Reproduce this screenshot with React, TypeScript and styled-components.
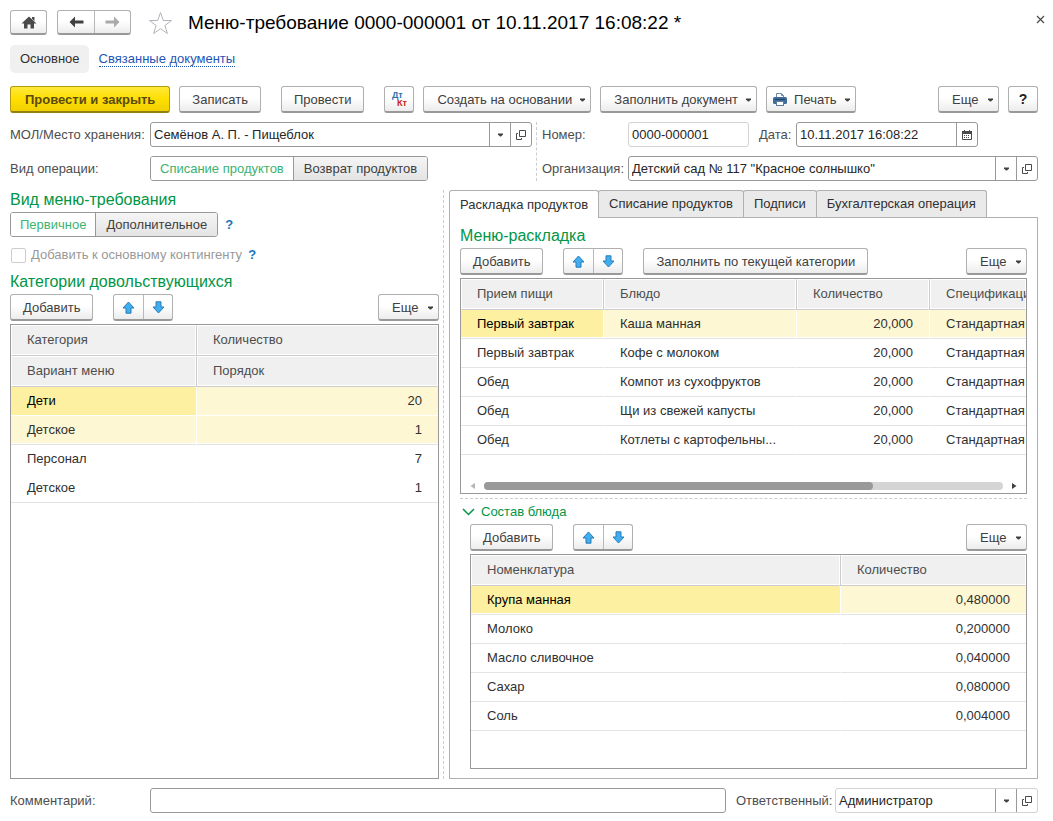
import React, { ReactNode, useId } from "react";
import styled, { createGlobalStyle, css } from "styled-components";

const Global = createGlobalStyle`
  *, *::before, *::after { box-sizing: border-box; }
  body { margin: 0; background: #fff; }
  body, button, input, select, table {
    font-family: "Liberation Sans", Arial, sans-serif;
    font-size: 13px;
    line-height: 16px;
    color: #404040;
  }
`;

const Page = styled.div`
  display: flex;
  flex-direction: column;
  min-height: 100vh;
  padding: 10px 15px 8px 10px;
`;

/* ---------- buttons ---------- */

const raised = css`
  border: 1px solid #b0b0b0;
  border-bottom: 2px solid #999;
  border-radius: 3px;
  background: linear-gradient(#fff 45%, #ececec);
`;

const Button = styled.button<{ $primary?: boolean; $width?: number; $height?: number }>`
  ${raised}
  display: inline-flex;
  align-items: center;
  justify-content: center;
  gap: 7px;
  flex: none;
  height: ${(p) => p.$height ?? 27}px;
  padding: 1px 12px 0;
  white-space: nowrap;
  ${(p) => p.$width && css`width: ${p.$width}px; padding: 0;`}
  ${(p) =>
    p.$primary &&
    css`
      padding: 1px 14px 0;
      border-color: #b39b12 #b39b12 #94800e;
      background: linear-gradient(#ffe93a, #ffdf00 50%, #f0d000);
      color: #5a4a10;
      font-weight: bold;
    `}
`;

const MenuButton = styled(Button)<{ $icon?: boolean }>`
  justify-content: space-between;
  min-width: 61px;
  padding: 1px 4px 0 ${(p) => (p.$icon ? 6 : 13)}px;
`;

const PairFrame = styled.div<{ $height: number }>`
  ${raised}
  display: flex;
  flex: none;
  height: ${(p) => p.$height}px;
`;

const PairButton = styled.button<{ $width: number }>`
  display: flex;
  align-items: center;
  justify-content: center;
  width: ${(p) => p.$width}px;
  padding: 0;
  border: 0;
  background: none;
  & + & { border-left: 1px solid #b8b8b8; }
`;

const Bar = styled.div`
  display: flex;
  align-items: center;
  gap: 20px;
  height: 27px;
  flex: none;
`;

const Spacer = styled.div`
  flex: 1;
`;

/* ---------- title ---------- */

const TitleRow = styled.header`
  display: flex;
  align-items: center;
  height: 25px;
  gap: 10px;
`;

const Title = styled.h1`
  flex: 1;
  margin: 1px 0 0 5px;
  font-size: 19px;
  line-height: 24px;
  font-weight: normal;
  color: #000;
  white-space: nowrap;
`;

const StarButton = styled.button`
  display: flex;
  margin-left: 7px;
  padding: 0;
  border: 0;
  background: none;
`;

const CloseButton = styled.button`
  align-self: flex-start;
  display: flex;
  margin: 5px -7px 0 0;
  padding: 0;
  border: 0;
  background: none;
`;

const Nav = styled.nav`
  display: flex;
  align-items: center;
  gap: 10px;
  margin-top: 10px;
`;

const NavCurrent = styled.a`
  padding: 6px 9px 6px 10px;
  border-radius: 5px;
  background: #f0f0f0;
  color: #303030;
  text-decoration: none;
`;

const NavLink = styled.a`
  color: #1f55b5;
  line-height: 15px;
  border-bottom: 1px dotted #1f55b5;
  text-decoration: none;
`;

const Commands = styled.div`
  display: flex;
  gap: 9px;
  margin-top: 13px;
`;

const Gap = styled.div`
  width: 2px;
`;

const DtKt = styled.span`
  display: flex;
  flex-direction: column;
  width: 15px;
  font-size: 9px;
  line-height: 8px;
  font-weight: bold;
  text-align: left;
  color: #2f6fa8;
`;

const Kt = styled.span`
  align-self: flex-end;
  color: #c8201a;
`;

const HelpMark = styled.span`
  font-size: 14px;
  font-weight: bold;
  color: #222;
`;

/* ---------- fields ---------- */

const Fields = styled.div`
  display: grid;
  grid-template-columns: minmax(0, 526fr) minmax(0, 502fr);
  margin-top: 9px;
`;

const FieldColumn = styled.div<{ $split?: boolean }>`
  display: flex;
  flex-direction: column;
  gap: 9px;
  ${(p) =>
    p.$split
      ? css`border-left: 1px dashed #ccc; padding-left: 5px;`
      : css`padding-right: 4px;`}
`;

const FieldRow = styled.div`
  display: flex;
  align-items: center;
  height: 25px;
`;

const Label = styled.label<{ $width?: number }>`
  flex: none;
  width: ${(p) => (p.$width ? `${p.$width}px` : "auto")};
  color: #4d4d4d;
  white-space: nowrap;
`;

const InputFrame = styled.div<{ $soft?: boolean; $width?: number }>`
  display: flex;
  height: 25px;
  min-width: 0;
  flex: ${(p) => (p.$width ? `0 0 ${p.$width}px` : "1")};
  border: 1px solid ${(p) => (p.$soft ? "#d3d3d3" : "#999")};
  border-radius: 3px;
  overflow: hidden;
`;

const Input = styled.input`
  flex: 1;
  min-width: 0;
  width: 0;
  padding: 0 3px;
  border: 0;
  outline: 0;
  background: none;
  color: #262626;
`;

const InputButton = styled.button`
  display: flex;
  align-items: center;
  justify-content: center;
  flex: none;
  width: 21px;
  padding: 0;
  border: 0;
  border-left: 1px solid #999;
  background: none;
`;

const Segments = styled.div`
  display: flex;
  height: 25px;
  border: 1px solid #999;
  border-radius: 3px;
  overflow: hidden;
`;

const Segment = styled.button<{ $active?: boolean }>`
  padding: 0 ${(p) => (p.$active ? 9 : 10)}px;
  border: 0;
  white-space: nowrap;
  background: ${(p) => (p.$active ? "#fff" : "linear-gradient(#f5f5f5, #e4e4e4)")};
  color: ${(p) => (p.$active ? "#3cb371" : "#404040")};
  & + & { border-left: 1px solid #999; }
`;

/* ---------- main area ---------- */

const Main = styled.main`
  display: grid;
  flex: 1;
  grid-template-columns: minmax(0, 433fr) minmax(0, 595fr);
  margin-top: 9px;
`;

const LeftPane = styled.section`
  display: flex;
  flex-direction: column;
  padding-right: 4px;
`;

const RightPane = styled.section`
  display: flex;
  flex-direction: column;
  padding-left: 5px;
  border-left: 1px dashed #ccc;
`;

const Heading = styled.h2`
  margin: 0 0 2px;
  font-size: 16px;
  line-height: 20px;
  font-weight: normal;
  color: #009646;
`;

const SegmentRow = styled.div`
  display: flex;
  align-items: center;
  gap: 7px;
`;

const HelpLink = styled.button`
  padding: 0;
  border: 0;
  background: none;
  color: #1a75bc;
  font-weight: bold;
`;

const CheckRow = styled.div`
  display: flex;
  align-items: center;
  gap: 6px;
  height: 16px;
  margin: 10px 0 9px;
`;

const CheckLabel = styled.label`
  display: flex;
  align-items: center;
  gap: 5px;
  color: #999;
`;

const CheckBox = styled.input`
  appearance: none;
  width: 15px;
  height: 15px;
  margin: 0 0 0 1px;
  border: 1px solid #ccc;
  border-radius: 2px;
  background: #fff;
`;

const Tabs = styled.div`
  display: flex;
  align-items: flex-start;
  height: 28px;
`;

const Tab = styled.button<{ $active?: boolean }>`
  height: ${(p) => (p.$active ? 28 : 27)}px;
  margin-left: ${(p) => (p.$active ? 0 : -1)}px;
  padding: 0 10px;
  border: 1px solid #b0b0b0;
  border-bottom: 0;
  border-radius: 3px 3px 0 0;
  background: ${(p) => (p.$active ? "#fff" : "#eaeaea")};
  color: #303030;
  white-space: nowrap;
  z-index: ${(p) => (p.$active ? 1 : 0)};
`;

const TabPanel = styled.div`
  display: flex;
  flex-direction: column;
  flex: 1;
  margin-top: -1px;
  padding: 8px 10px 9px;
  border: 1px solid #b0b0b0;
`;

const TableFrame = styled.div<{ $fill?: boolean }>`
  display: flex;
  flex-direction: column;
  flex: ${(p) => (p.$fill ? "1" : "none")};
  margin-top: 3px;
  min-height: ${(p) => (p.$fill ? "0" : "216px")};
  border: 1px solid #999;
  overflow: hidden;
`;

const Table = styled.table`
  width: 100%;
  table-layout: fixed;
  border-collapse: separate;
  border-spacing: 0;
`;

const Th = styled.th`
  height: 31px;
  padding: 0 0 1px 15px;
  border: 1px solid #fff;
  border-bottom: 1px solid #ccc;
  background: #f0f0f0;
  color: #4d4d4d;
  font-weight: normal;
  text-align: left;
  white-space: nowrap;
  box-shadow: inset 0 -1px #fff;
  & + & {
    padding-left: 16px;
    border-left-color: #ccc;
    box-shadow: inset 1px -1px #fff;
  }
`;

const tones = { current: "#fdf0a0", row: "#fdf7d3" };

const Td = styled.td<{ $tone?: "current" | "row"; $num?: boolean; $joined?: boolean }>`
  height: 29px;
  padding: 0 ${(p) => (p.$num ? 16 : 0)}px 0 16px;
  border-bottom: 1px solid ${(p) => (p.$joined ? "#fff" : "#e3e3e3")};
  background: ${(p) => (p.$tone ? tones[p.$tone] : "#fff")};
  color: ${(p) => (p.$tone === "current" ? "#000" : "#303030")};
  text-align: ${(p) => (p.$num ? "right" : "left")};
  white-space: nowrap;
  overflow: hidden;
  box-shadow: ${(p) => (p.$tone && !p.$joined ? "inset 0 -1px #fff" : "none")};
  & + & { border-left: 1px solid ${(p) => (p.$tone ? "#fff" : "transparent")}; }
`;

const Col = styled.col<{ $width: string }>`
  width: ${(p) => p.$width};
`;

const ScrollBar = styled.div`
  display: flex;
  align-items: center;
  gap: 9px;
  margin: auto 9px 3px;
`;

const ScrollTrack = styled.div`
  flex: 1;
  height: 8px;
  border-radius: 4px;
  background: #d5d5d5;
`;

const ScrollThumb = styled.div`
  width: 75%;
  height: 8px;
  border-radius: 4px;
  background: #999;
`;

const Splitter = styled.div`
  margin-top: 4px;
  border-top: 1px dashed #ccc;
`;

const GroupToggle = styled.button`
  display: flex;
  align-items: center;
  gap: 6px;
  align-self: flex-start;
  height: 25px;
  padding: 0 2px;
  border: 0;
  background: none;
  color: #009646;
`;

const Group = styled.div`
  display: flex;
  flex-direction: column;
  flex: 1;
  padding-left: 10px;
`;

const Footer = styled.footer`
  display: flex;
  align-items: center;
  margin-top: 9px;
`;

const FieldGap = styled.div`
  width: 10px;
`;

/* ---------- icons ---------- */

const Caret = () => (
  <svg width="7" height="4" viewBox="0 0 7 4" aria-hidden="true">
    <path d="M1 0.500h5v1L4 3.500H3L1 1.500z" fill="#404040" />
  </svg>
);

const OpenIcon = () => (
  <svg width="10" height="10" viewBox="0 0 10 10" fill="none" stroke="#4a4a4a" aria-hidden="true">
    <path d="M3.500 0.500h6v6h-6zM2 3.500H0.500v6h5V8" />
  </svg>
);

const HomeIcon = () => (
  <svg width="16" height="13" viewBox="0 0 16 13" fill="#4a4a4a" aria-hidden="true">
    <path d="M8 0.500L15.500 7.500H13V12.500H9.500V8.500h-3v4H3v-5H0.500zM11 1h2.500v4L11 2.700z" />
  </svg>
);

const ArrowIcon = ({ color, flip }: { color: string; flip?: boolean }) => (
  <svg width="15" height="12" viewBox="0 0 15 12" aria-hidden="true">
    <path
      d={flip ? "M14.500 6L9 0.500v4H0.500v3H9v4z" : "M0.500 6L6 0.500v4h8.500v3H6v4z"}
      fill={color}
    />
  </svg>
);

const StarIcon = () => (
  <svg width="25" height="24" viewBox="0 0 25 24" fill="none" stroke="#b0b5ba" aria-hidden="true">
    <path d="M12.500 1.500l2.800 8h8.200l-6.600 5 2.500 8-6.900-4.800-6.900 4.800 2.500-8-6.600-5h8.200z" />
  </svg>
);

const CloseIcon = () => (
  <svg width="9" height="9" viewBox="0 0 9 9" stroke="#4a4a4a" strokeWidth="1.2" aria-hidden="true">
    <path d="M1 1l7 7M8 1L1 8" />
  </svg>
);

const PrinterIcon = () => (
  <svg width="14" height="15" viewBox="0 0 14 15" aria-hidden="true">
    <path d="M3.500 6V1.500h5l2 2V6" fill="#fff" stroke="#6f8ba8" />
    <path d="M8.500 1.500v2h2" fill="none" stroke="#6f8ba8" />
    <rect x="0" y="5" width="14" height="7" rx="1.500" fill="#3f6c99" />
    <path d="M2 7.500h10" stroke="#1f4469" />
    <rect x="3.500" y="9.500" width="7" height="4" fill="#fff" stroke="#5a7da0" />
  </svg>
);

const MoveIcon = ({ down }: { down?: boolean }) => (
  <svg width="13" height="13" viewBox="0 0 13 13" aria-hidden="true">
    <path
      d={
        down
          ? "M4 0.800h5v5.200h3L6.500 12 1 6h3z"
          : "M6.500 1L12 7H9v5.200H4V7H1z"
      }
      fill="#41aef0"
      stroke="#2b7cb5"
      strokeLinejoin="round"
    />
  </svg>
);

const CalendarIcon = () => (
  <svg width="10" height="10" viewBox="0 0 10 10" aria-hidden="true">
    <path d="M0.500 2.500h9v7h-9z" fill="#fff" stroke="#4a4a4a" />
    <path d="M0 1h10v3H0zM2 0h1v1H2zM7 0h1v1H7z" fill="#4a4a4a" />
    <path d="M2 5.500h6M2 7.500h6" stroke="#4a4a4a" strokeDasharray="1 1" />
  </svg>
);

const ChevronIcon = () => (
  <svg width="13" height="8" viewBox="0 0 13 8" fill="none" stroke="#009646" strokeWidth="1.500" aria-hidden="true">
    <path d="M1 1l5.500 5.500L12 1" />
  </svg>
);

const ScrollArrow = ({ right }: { right?: boolean }) => (
  <svg width="5" height="6" viewBox="0 0 5 6" aria-hidden="true">
    <path d={right ? "M0 0v6l4.500-3z" : "M5 0v6L0.500 3z"} fill={right ? "#404040" : "#b5b5b5"} />
  </svg>
);

/* ---------- composed parts ---------- */

const MoveButtons = () => (
  <PairFrame $height={27}>
    <PairButton $width={29} aria-label="Переместить вверх"><MoveIcon /></PairButton>
    <PairButton $width={29} aria-label="Переместить вниз"><MoveIcon down /></PairButton>
  </PairFrame>
);

const More = () => (
  <MenuButton>Еще <Caret /></MenuButton>
);

const ListBar = ({ children }: { children?: ReactNode }) => (
  <Bar>
    <Button>Добавить</Button>
    <MoveButtons />
    {children}
    <Spacer />
    <More />
  </Bar>
);

type FieldProps = {
  label: string;
  value: string;
  labelWidth?: number;
  width?: number;
  soft?: boolean;
  kind?: "ref" | "date" | "plain";
};

const Field = ({ label, value, labelWidth, width, soft, kind = "plain" }: FieldProps) => {
  const id = useId();
  return (
    <>
      <Label htmlFor={id} $width={labelWidth}>{label}</Label>
      <InputFrame $soft={soft} $width={width}>
        <Input id={id} defaultValue={value} />
        {kind === "ref" && (
          <>
            <InputButton aria-label="Выбрать"><Caret /></InputButton>
            <InputButton aria-label="Открыть"><OpenIcon /></InputButton>
          </>
        )}
        {kind === "date" && <InputButton aria-label="Календарь"><CalendarIcon /></InputButton>}
      </InputFrame>
    </>
  );
};

const categories = [
  { name: "Дети", count: "20", menu: "Детское", order: "1" },
  { name: "Персонал", count: "7", menu: "Детское", order: "1" },
];

const dishes = [
  ["Первый завтрак", "Каша манная"],
  ["Первый завтрак", "Кофе с молоком"],
  ["Обед", "Компот из сухофруктов"],
  ["Обед", "Щи из свежей капусты"],
  ["Обед", "Котлеты с картофельны..."],
];

const ingredients = [
  ["Крупа манная", "0,480000"],
  ["Молоко", "0,200000"],
  ["Масло сливочное", "0,040000"],
  ["Сахар", "0,080000"],
  ["Соль", "0,004000"],
];

export default function App() {
  return (
    <Page>
      <Global />
      <TitleRow>
        <Button $width={37} $height={25} aria-label="Начальная страница"><HomeIcon /></Button>
        <PairFrame $height={25}>
          <PairButton $width={36} aria-label="Назад"><ArrowIcon color="#404040" /></PairButton>
          <PairButton $width={36} aria-label="Вперед"><ArrowIcon color="#aaa" flip /></PairButton>
        </PairFrame>
        <StarButton aria-label="В избранное"><StarIcon /></StarButton>
        <Title>Меню-требование 0000-000001 от 10.11.2017 16:08:22 *</Title>
        <CloseButton aria-label="Закрыть"><CloseIcon /></CloseButton>
      </TitleRow>

      <Nav>
        <NavCurrent href="#main">Основное</NavCurrent>
        <NavLink href="#linked">Связанные документы</NavLink>
      </Nav>

      <Commands>
        <Button $primary>Провести и закрыть</Button>
        <Button>Записать</Button>
        <Gap />
        <Button>Провести</Button>
        <Gap />
        <Button $width={30} aria-label="Дт Кт">
          <DtKt>Дт<Kt>Кт</Kt></DtKt>
        </Button>
        <MenuButton>Создать на основании <Caret /></MenuButton>
        <MenuButton>Заполнить документ <Caret /></MenuButton>
        <MenuButton $icon><PrinterIcon /> Печать <Caret /></MenuButton>
        <Spacer />
        <More />
        <Button $width={30} aria-label="Справка"><HelpMark>?</HelpMark></Button>
      </Commands>

      <Fields>
        <FieldColumn>
          <FieldRow>
            <Field label="МОЛ/Место хранения:" value="Семёнов А. П. - Пищеблок" labelWidth={140} kind="ref" />
          </FieldRow>
          <FieldRow>
            <Label as="span" $width={140}>Вид операции:</Label>
            <Segments>
              <Segment $active>Списание продуктов</Segment>
              <Segment>Возврат продуктов</Segment>
            </Segments>
          </FieldRow>
        </FieldColumn>
        <FieldColumn $split>
          <FieldRow>
            <Field label="Номер:" value="0000-000001" labelWidth={86} width={121} soft />
            <FieldGap />
            <Field label="Дата:" value="10.11.2017 16:08:22" labelWidth={37} width={182} kind="date" />
          </FieldRow>
          <FieldRow>
            <Field label="Организация:" value={'Детский сад № 117 "Красное солнышко"'} labelWidth={86} kind="ref" />
          </FieldRow>
        </FieldColumn>
      </Fields>

      <Main>
        <LeftPane>
          <Heading>Вид меню-требования</Heading>
          <SegmentRow>
            <Segments>
              <Segment $active>Первичное</Segment>
              <Segment>Дополнительное</Segment>
            </Segments>
            <HelpLink>?</HelpLink>
          </SegmentRow>
          <CheckRow>
            <CheckLabel>
              <CheckBox type="checkbox" disabled />
              Добавить к основному контингенту
            </CheckLabel>
            <HelpLink>?</HelpLink>
          </CheckRow>
          <Heading>Категории довольствующихся</Heading>
          <ListBar />
          <TableFrame $fill>
            <Table>
              <colgroup>
                <Col $width="185px" />
                <Col $width="auto" />
              </colgroup>
              <thead>
                <tr><Th>Категория</Th><Th>Количество</Th></tr>
                <tr><Th>Вариант меню</Th><Th>Порядок</Th></tr>
              </thead>
              {categories.map((c, i) => (
                <tbody key={c.name}>
                  <tr>
                    <Td $joined $tone={i === 0 ? "current" : undefined}>{c.name}</Td>
                    <Td $joined $tone={i === 0 ? "row" : undefined} $num>{c.count}</Td>
                  </tr>
                  <tr>
                    <Td $tone={i === 0 ? "row" : undefined}>{c.menu}</Td>
                    <Td $tone={i === 0 ? "row" : undefined} $num>{c.order}</Td>
                  </tr>
                </tbody>
              ))}
            </Table>
          </TableFrame>
        </LeftPane>

        <RightPane>
          <Tabs role="tablist">
            <Tab role="tab" $active>Раскладка продуктов</Tab>
            <Tab role="tab">Списание продуктов</Tab>
            <Tab role="tab">Подписи</Tab>
            <Tab role="tab">Бухгалтерская операция</Tab>
          </Tabs>
          <TabPanel>
            <Heading>Меню-раскладка</Heading>
            <ListBar>
              <Button>Заполнить по текущей категории</Button>
            </ListBar>
            <TableFrame>
              <Table>
                <colgroup>
                  <Col $width="142px" />
                  <Col $width="auto" />
                  <Col $width="133px" />
                  <Col $width="97px" />
                </colgroup>
                <thead>
                  <tr><Th>Прием пищи</Th><Th>Блюдо</Th><Th>Количество</Th><Th>Спецификация</Th></tr>
                </thead>
                <tbody>
                  {dishes.map(([meal, dish], i) => (
                    <tr key={dish}>
                      <Td $tone={i === 0 ? "current" : undefined}>{meal}</Td>
                      <Td $tone={i === 0 ? "row" : undefined}>{dish}</Td>
                      <Td $tone={i === 0 ? "row" : undefined} $num>20,000</Td>
                      <Td $tone={i === 0 ? "row" : undefined}>Стандартная</Td>
                    </tr>
                  ))}
                </tbody>
              </Table>
              <ScrollBar>
                <ScrollArrow />
                <ScrollTrack><ScrollThumb /></ScrollTrack>
                <ScrollArrow right />
              </ScrollBar>
            </TableFrame>
            <Splitter />
            <GroupToggle><ChevronIcon /> Состав блюда</GroupToggle>
            <Group>
              <ListBar />
              <TableFrame $fill>
                <Table>
                  <colgroup>
                    <Col $width="auto" />
                    <Col $width="186px" />
                  </colgroup>
                  <thead>
                    <tr><Th>Номенклатура</Th><Th>Количество</Th></tr>
                  </thead>
                  <tbody>
                    {ingredients.map(([name, amount], i) => (
                      <tr key={name}>
                        <Td $tone={i === 0 ? "current" : undefined}>{name}</Td>
                        <Td $tone={i === 0 ? "row" : undefined} $num>{amount}</Td>
                      </tr>
                    ))}
                  </tbody>
                </Table>
              </TableFrame>
            </Group>
          </TabPanel>
        </RightPane>
      </Main>

      <Footer>
        <Field label="Комментарий:" value="" labelWidth={140} />
        <FieldGap />
        <Field label="Ответственный:" value="Администратор" labelWidth={99} width={203} kind="ref" soft />
      </Footer>
    </Page>
  );
}
